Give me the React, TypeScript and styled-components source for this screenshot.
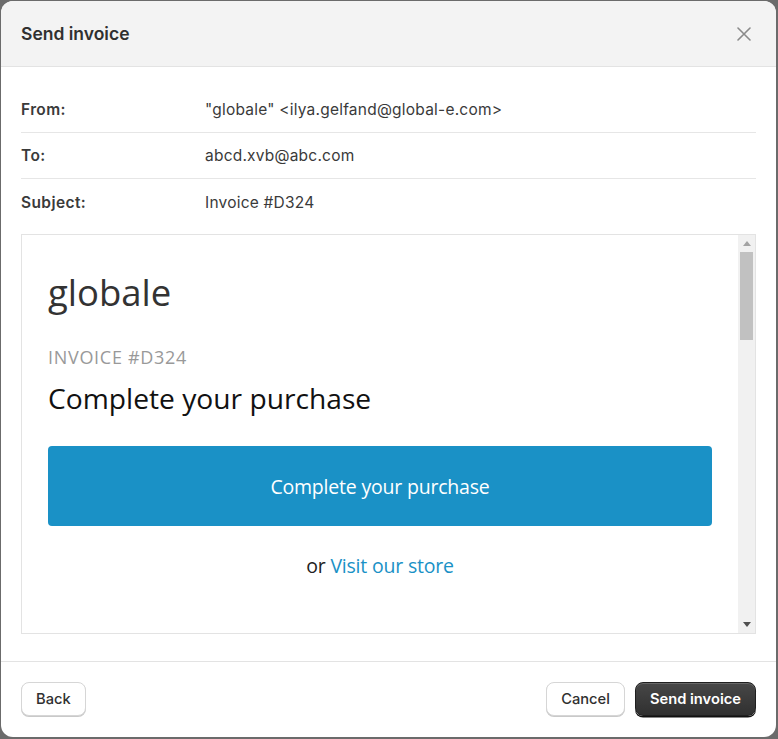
import React from "react";
import styled, { createGlobalStyle } from "styled-components";

const Global = createGlobalStyle`
  html, body { margin: 0; padding: 0; }
  body {
    background: #6b6b6b;
    font-family: Inter, "Noto Sans", sans-serif;
    -webkit-font-smoothing: antialiased;
  }
`;

const Backdrop = styled.div`
  width: 778px;
  height: 739px;
  box-sizing: border-box;
  padding: 1px 2px 2px 1px;
  background: #6b6b6b;
`;

const Modal = styled.div`
  width: 100%;
  height: 100%;
  background: #fff;
  border-radius: 12px;
  overflow: hidden;
  display: flex;
  flex-direction: column;
`;

const Header = styled.header`
  height: 65px;
  flex: none;
  background: #f3f3f3;
  border-bottom: 1px solid #e3e3e3;
  display: flex;
  align-items: center;
  justify-content: space-between;
  padding: 0 20px 0 20px;
`;

const Title = styled.h2`
  margin: 0;
  font-size: 17.5px;
  font-weight: 600;
  color: #303030;
  letter-spacing: 0;
`;

const CloseButton = styled.button`
  width: 24px;
  height: 24px;
  border: 0;
  background: transparent;
  padding: 0;
  display: flex;
  align-items: center;
  justify-content: center;
  cursor: pointer;
`;

const Body = styled.div`
  flex: 1;
  padding: 20px 20px 0 20px;
  display: flex;
  flex-direction: column;
`;

const FieldRow = styled.div<{ $divider?: boolean }>`
  height: 46px;
  display: grid;
  grid-template-columns: 184px 1fr;
  align-items: center;
  border-bottom: ${(p) => (p.$divider ? "1px solid #e6e6e6" : "0")};
  box-sizing: border-box;
  font-size: 15.5px;
  color: #303030;
`;

const Label = styled.span`
  font-weight: 600;
  letter-spacing: 0.4px;
  color: #3a3a3a;
`;

const Value = styled.span`
  font-weight: 400;
  color: #3a3a3a;
  letter-spacing: 0.22px;
`;

const Preview = styled.div`
  margin-top: 9px;
  height: 400px;
  box-sizing: border-box;
  border: 1px solid #e3e3e3;
  display: flex;
`;

const PreviewContent = styled.div`
  flex: 1;
  padding: 34px 26px 0 26px;
  font-family: "Open Sans", "Noto Sans", sans-serif;
  overflow: hidden;
`;

const Brand = styled.div`
  font-size: 36.5px;
  color: #333;
  line-height: 46px;
`;

const InvoiceNo = styled.div`
  margin-top: 30px;
  font-size: 18px;
  color: #999;
  line-height: 24px;
  letter-spacing: 0.7px;
`;

const Heading = styled.div`
  margin-top: 11px;
  font-size: 28.2px;
  color: #111;
  line-height: 36px;
`;

const CtaButton = styled.a`
  margin-top: 30px;
  height: 80px;
  border-radius: 4px;
  background: #1a91c6;
  color: #fff;
  display: flex;
  align-items: center;
  justify-content: center;
  font-size: 19.5px;
  text-decoration: none;
  letter-spacing: -0.2px;
`;

const OrLine = styled.div`
  margin-top: 26px;
  text-align: center;
  font-size: 19.5px;
  color: #222;
  line-height: 28px;
  letter-spacing: -0.2px;
`;

const StoreLink = styled.a`
  color: #1a91c6;
  text-decoration: none;
`;

const Scrollbar = styled.div`
  width: 17px;
  flex: none;
  background: #f1f1f1;
  display: flex;
  flex-direction: column;
  align-items: center;
`;

const ArrowCell = styled.div`
  height: 17px;
  width: 17px;
  display: flex;
  align-items: center;
  justify-content: center;
`;

const Thumb = styled.div`
  width: 13px;
  height: 88px;
  background: #c1c1c1;
`;

const Track = styled.div`
  flex: 1;
`;

const Footer = styled.footer`
  flex: none;
  border-top: 1px solid #e3e3e3;
  padding: 20px 20px 21px 20px;
  display: flex;
  align-items: center;
  justify-content: space-between;
`;

const ButtonGroup = styled.div`
  display: flex;
  gap: 10px;
`;

const Btn = styled.button<{ $primary?: boolean }>`
  height: 34px;
  padding: 0 14px;
  border-radius: 8px;
  font-family: Inter, "Noto Sans", sans-serif;
  font-size: 14.7px;
  font-weight: ${(p) => (p.$primary ? 600 : 450)};
  letter-spacing: 0;
  cursor: pointer;
  box-sizing: border-box;
  ${(p) =>
    p.$primary
      ? `
    background: linear-gradient(#474747, #303030);
    color: #fff;
    border: 1px solid #1f1f1f;
    box-shadow: 0 1.5px 0 #111, inset 0 1px 0 rgba(255,255,255,0.18);
  `
      : `
    background: #fff;
    color: #303030;
    border: 1px solid #d6d6d6;
    box-shadow: 0 1px 0 #c9c9c9;
  `}
`;

export default function App() {
  return (
    <>
      <Global />
      <Backdrop>
        <Modal>
          <Header>
            <Title>Send invoice</Title>
            <CloseButton aria-label="Close">
              <svg width="14" height="14" viewBox="0 0 14 14">
                <path d="M1 1L13 13M13 1L1 13" stroke="#8a8a8a" strokeWidth="1.6" strokeLinecap="round" />
              </svg>
            </CloseButton>
          </Header>
          <Body>
            <FieldRow $divider>
              <Label>From:</Label>
              <Value>"globale" &lt;ilya.gelfand@global-e.com&gt;</Value>
            </FieldRow>
            <FieldRow $divider>
              <Label>To:</Label>
              <Value>abcd.xvb@abc.com</Value>
            </FieldRow>
            <FieldRow>
              <Label>Subject:</Label>
              <Value>Invoice #D324</Value>
            </FieldRow>
            <Preview>
              <PreviewContent>
                <Brand>globale</Brand>
                <InvoiceNo>INVOICE #D324</InvoiceNo>
                <Heading>Complete your purchase</Heading>
                <CtaButton href="#">Complete your purchase</CtaButton>
                <OrLine>
                  or <StoreLink href="#">Visit our store</StoreLink>
                </OrLine>
              </PreviewContent>
              <Scrollbar>
                <ArrowCell>
                  <svg width="8" height="5" viewBox="0 0 8 5">
                    <path d="M0 5L4 0L8 5Z" fill="#a3a3a3" />
                  </svg>
                </ArrowCell>
                <Thumb />
                <Track />
                <ArrowCell>
                  <svg width="8" height="5" viewBox="0 0 8 5">
                    <path d="M0 0L8 0L4 5Z" fill="#505050" />
                  </svg>
                </ArrowCell>
              </Scrollbar>
            </Preview>
          </Body>
          <Footer>
            <Btn>Back</Btn>
            <ButtonGroup>
              <Btn>Cancel</Btn>
              <Btn $primary>Send invoice</Btn>
            </ButtonGroup>
          </Footer>
        </Modal>
      </Backdrop>
    </>
  );
}
